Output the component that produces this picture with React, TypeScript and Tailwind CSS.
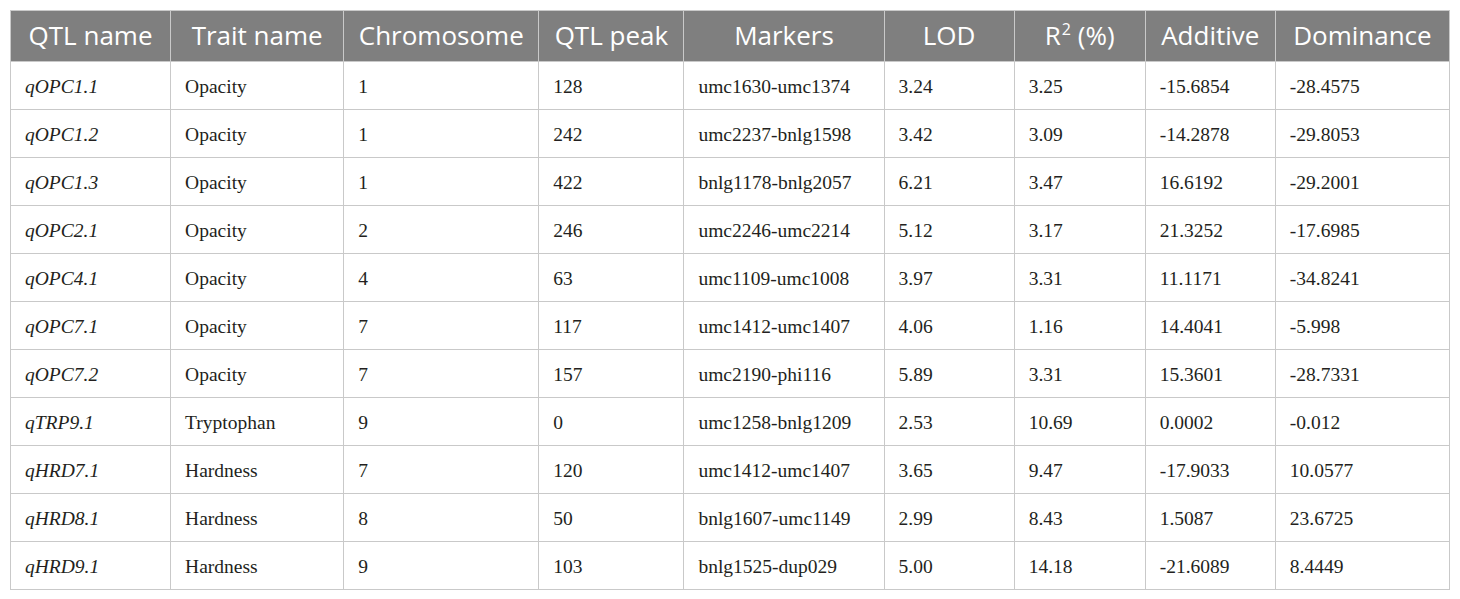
import React from "react";

const cols = [160, 173, 195, 145, 200, 130, 131, 130, 174];

const rows: string[][] = [
  ["qOPC1.1", "Opacity", "1", "128", "umc1630-umc1374", "3.24", "3.25", "-15.6854", "-28.4575"],
  ["qOPC1.2", "Opacity", "1", "242", "umc2237-bnlg1598", "3.42", "3.09", "-14.2878", "-29.8053"],
  ["qOPC1.3", "Opacity", "1", "422", "bnlg1178-bnlg2057", "6.21", "3.47", "16.6192", "-29.2001"],
  ["qOPC2.1", "Opacity", "2", "246", "umc2246-umc2214", "5.12", "3.17", "21.3252", "-17.6985"],
  ["qOPC4.1", "Opacity", "4", "63", "umc1109-umc1008", "3.97", "3.31", "11.1171", "-34.8241"],
  ["qOPC7.1", "Opacity", "7", "117", "umc1412-umc1407", "4.06", "1.16", "14.4041", "-5.998"],
  ["qOPC7.2", "Opacity", "7", "157", "umc2190-phi116", "5.89", "3.31", "15.3601", "-28.7331"],
  ["qTRP9.1", "Tryptophan", "9", "0", "umc1258-bnlg1209", "2.53", "10.69", "0.0002", "-0.012"],
  ["qHRD7.1", "Hardness", "7", "120", "umc1412-umc1407", "3.65", "9.47", "-17.9033", "10.0577"],
  ["qHRD8.1", "Hardness", "8", "50", "bnlg1607-umc1149", "2.99", "8.43", "1.5087", "23.6725"],
  ["qHRD9.1", "Hardness", "9", "103", "bnlg1525-dup029", "5.00", "14.18", "-21.6089", "8.4449"],
];

export default function App() {
  return (
    <div className="w-[1460px] h-[599px] bg-white pt-[10px] pl-[10px]">
      <table
        className="border-collapse table-fixed w-[1440px]"
        style={{ borderSpacing: 0 }}
      >
        <colgroup>
          {cols.map((w, i) => (
            <col key={i} style={{ width: w }} />
          ))}
        </colgroup>
        <thead>
          <tr className="h-[51px] bg-[#7f7f7f] text-white text-[26px] font-['Open_Sans',sans-serif]">
            {[
              "QTL name",
              "Trait name",
              "Chromosome",
              "QTL peak",
              "Markers",
              "LOD",
              null,
              "Additive",
              "Dominance",
            ].map((h, i) => (
              <th
                key={i}
                className="border border-[#c9c9c9] font-normal text-center px-0 pb-[2px] leading-none whitespace-nowrap"
              >
                {h === null ? (
                  <span>
                    R<span className="text-[16px] relative -top-[10px] ml-[1px]">2</span> (%)
                  </span>
                ) : (
                  h
                )}
              </th>
            ))}
          </tr>
        </thead>
        <tbody className="font-['Liberation_Serif',serif] text-[19.5px] text-[#231f20]">
          {rows.map((r, ri) => (
            <tr key={ri} className="h-[48px]">
              {r.map((c, ci) => (
                <td
                  key={ci}
                  className={`border border-[#c9c9c9] pl-[14px] pt-[3px] text-left whitespace-nowrap ${
                    ci === 0 ? "italic" : ""
                  }`}
                >
                  {c}
                </td>
              ))}
            </tr>
          ))}
        </tbody>
      </table>
    </div>
  );
}
